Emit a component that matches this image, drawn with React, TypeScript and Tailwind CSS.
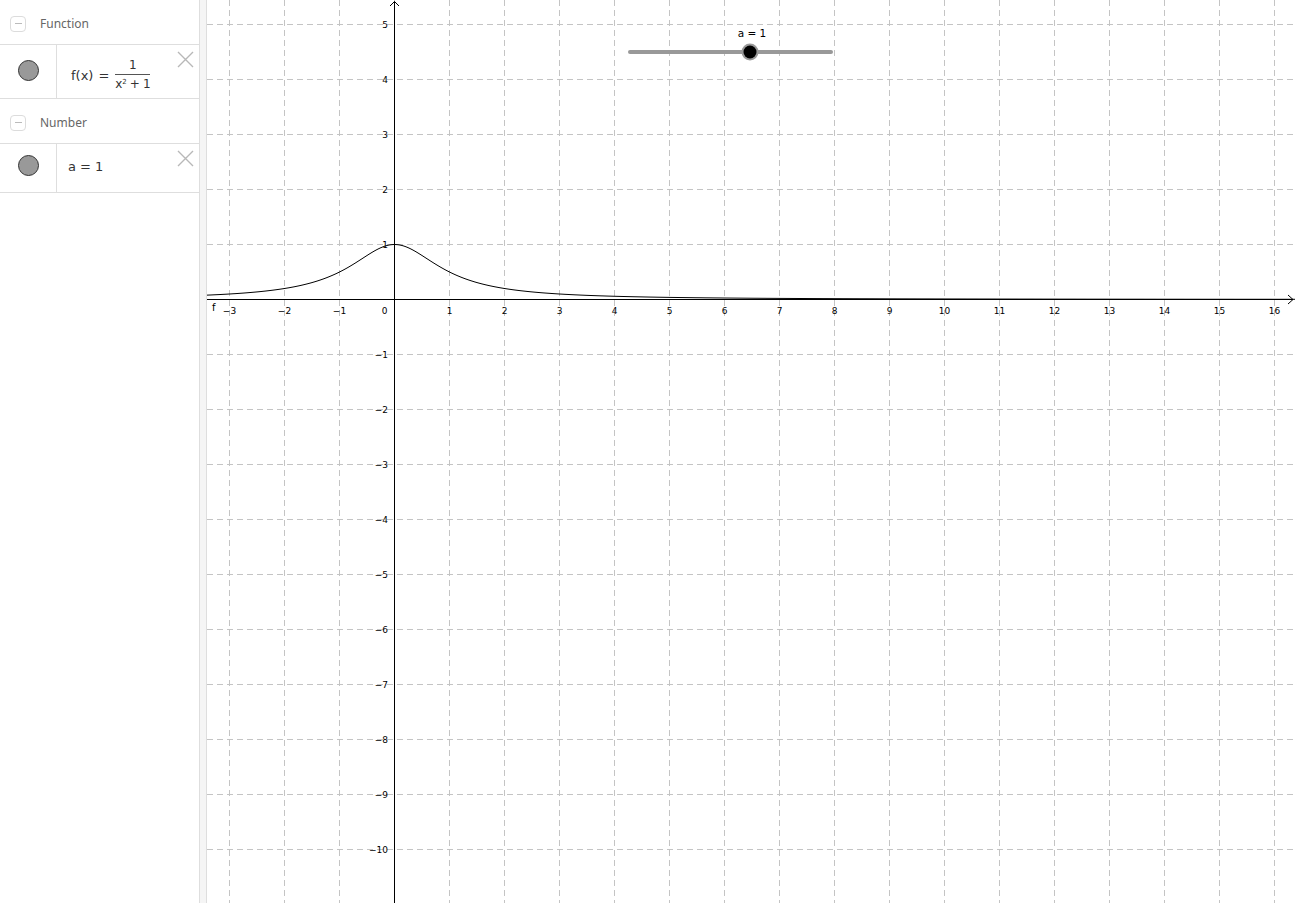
const OX = 394.5;
const OY = 299.5;
const U = 55;

function CloseIcon() {
  return (
    <svg width="17" height="17" viewBox="0 0 17 17" className="absolute top-[6px] right-[5px]">
      <path d="M1 1 L16 16 M16 1 L1 16" stroke="#b8b8b8" strokeWidth="1.4" fill="none" />
    </svg>
  );
}

function GroupHeader({ title }: { title: string }) {
  return (
    <div className="flex items-center h-[45px] pt-[3px] border-b border-[#dedede]">
      <div className="ml-[10px] w-[16px] h-[16px] rounded-[4px] border border-[#dcdcdc] flex items-center justify-center">
        <div className="w-[7px] h-px bg-[#bbb]" />
      </div>
      <span className="ml-[14px] text-[12px] text-[#666] font-['Noto_Sans',sans-serif]">{title}</span>
    </div>
  );
}

function Item({ h, pad, children }: { h: string; pad: string; children: React.ReactNode }) {
  return (
    <div className={`relative flex border-b border-[#dedede] ${h}`}>
      <div className={`w-[57px] border-r border-[#dedede] flex justify-center ${pad}`}>
        <div className="w-[21px] h-[21px] rounded-full bg-[#999] border border-[#333]" />
      </div>
      {children}
      <CloseIcon />
    </div>
  );
}

function curvePath() {
  const pts: string[] = [];
  for (let px = 207; px <= 1296; px += 2) {
    const x = (px - OX) / U;
    const y = 1 / (x * x + 1);
    pts.push(`${pts.length ? "L" : "M"}${px} ${(OY - U * y).toFixed(2)}`);
  }
  return pts.join(" ");
}

function minus(n: number) {
  return n < 0 ? `\u2212${-n}` : `${n}`;
}

function Graph() {
  const xs = Array.from({ length: 20 }, (_, i) => i - 3);
  const ys = Array.from({ length: 16 }, (_, i) => 5 - i);
  return (
    <svg width="1089" height="903" viewBox="207 0 1089 903" className="block font-['DejaVu_Sans',sans-serif]">
      {xs.map((k) => (
        <line key={`gx${k}`} x1={OX + k * U} y1={0} x2={OX + k * U} y2={903} stroke="#c4c4c4" strokeDasharray="6 4" />
      ))}
      {ys.map((k) => (
        <line key={`gy${k}`} x1={207} y1={OY - k * U} x2={1296} y2={OY - k * U} stroke="#c4c4c4" strokeDasharray="6 4" />
      ))}
      {/* axes */}
      <line x1={207} y1={OY} x2={1293} y2={OY} stroke="#000" />
      <path d="M1288 295 L1293 299.5 L1288 304" stroke="#000" fill="none" />
      <line x1={OX} y1={903} x2={OX} y2={1.5} stroke="#000" />
      <path d="M390 6 L394.5 1.5 L399 6" stroke="#000" fill="none" />

      {xs.map((k) =>
        k === 0 ? (
          <text key={`lx${k}`} x={384.5} y={314} fontSize="9" textAnchor="middle" fill="#000">0</text>
        ) : (
          <text key={`lx${k}`} x={OX + k * U} y={314} fontSize="9" textAnchor="middle" fill="#000">{minus(k)}</text>
        )
      )}
      {ys
        .filter((k) => k !== 0)
        .map((k) => (
          <text key={`ly${k}`} x={388} y={OY - k * U + 3.5} fontSize="9" textAnchor="end" fill="#000">{minus(k)}</text>
        ))}

      <path d={curvePath()} stroke="#000" strokeWidth="1" fill="none" />
      <text x={212} y={311} fontSize="10" fill="#000">f</text>

      {/* slider */}
      <line x1={630} y1={52} x2={831} y2={52} stroke="#999" strokeWidth="4" strokeLinecap="round" />
      <circle cx={750} cy={52} r={8.5} fill="#999" />
      <circle cx={750} cy={52} r={6.5} fill="#000" />
      <text x={752} y={37} fontSize="10.5" textAnchor="middle" fill="#000">a = 1</text>
    </svg>
  );
}

export default function App() {
  return (
    <div className="flex w-[1296px] h-[903px] overflow-hidden bg-white">
      <aside className="w-[200px] h-full border-r border-[#dedede] flex flex-col">
        <GroupHeader title="Function" />
        <Item h="h-[54px]" pad="pt-[15px]">
          <div className="flex items-center pl-[14px] pt-[5px] text-[13px] text-[#333] font-['DejaVu_Sans',sans-serif]">
            <span className="mt-[4px]">f(x)</span>
            <span className="ml-[5px] mt-[4px]">=</span>
            <span className="ml-[6px] inline-flex flex-col items-center text-[12px] leading-[14px]">
              <span className="px-[1px]">1</span>
              <span className="w-[35px] h-px bg-[#555] my-[2px]" />
              <span className="tracking-[-0.3px]">
                x<sup className="text-[7px]">2</sup> + 1
              </span>
            </span>
          </div>
        </Item>
        <GroupHeader title="Number" />
        <Item h="h-[49px]" pad="pt-[11px]">
          <div className="flex items-start pt-[13px] pl-[11px] text-[13px] text-[#333] font-['DejaVu_Sans',sans-serif]">
            a = 1
          </div>
        </Item>
      </aside>
      <div className="w-[7px] h-full bg-[#f5f5f5] border-r border-[#dedede]" />
      <div className="relative flex-1 h-full">
        <Graph />
      </div>
    </div>
  );
}
